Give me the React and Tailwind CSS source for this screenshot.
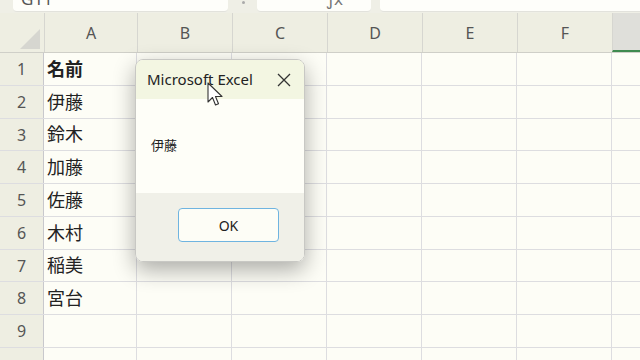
import React from "react";

const cols = [
  { l: "A", w: "w-[93px]" },
  { l: "B", w: "w-[95px]" },
  { l: "C", w: "w-[95px]" },
  { l: "D", w: "w-[95px]" },
  { l: "E", w: "w-[95px]" },
  { l: "F", w: "w-[95px]" },
  { l: "", w: "w-[40px]" },
];
const rowH = ["h-[33px]", "h-[33px]", "h-[32px]", "h-[33px]", "h-[33px]", "h-[33px]", "h-[32px]", "h-[33px]", "h-[33px]", "h-[33px]"];
const names = ["名前", "伊藤", "鈴木", "加藤", "佐藤", "木村", "稲美", "宮台", "", ""];

export default function App() {
  return (
    <div className="relative w-[640px] h-[360px] overflow-hidden bg-[#fdfdf6] text-[#333]" style={{ fontFamily: '"Noto Sans", "Noto Sans CJK JP", sans-serif' }}>
      {/* top strip */}
      <div className="flex h-[13px] bg-[#efefe6] items-start">
        <div className="ml-[13px] w-[215px] shrink-0 h-[12px] bg-[#fefefa] rounded-b-[4px] border-b border-[#e2e2dc] overflow-hidden">
          <div className="-mt-[12px] pl-[8px] text-[17px] leading-[22px] text-[#555]">G11</div>
        </div>
        <div className="ml-[14px] w-[3px] h-[3px] mt-[1px] shrink-0 rounded-full bg-[#aaa]"></div>
        <div className="ml-[12px] w-[114px] shrink-0 h-[12px] bg-[#fefefa] rounded-b-[4px] border-b border-[#e2e2dc] overflow-hidden">
          <div className="-mt-[12px] pl-[70px] text-[17px] leading-[22px] text-[#777]">ƒx</div>
        </div>
        <div className="ml-[9px] flex-1 h-[12px] bg-[#fefefa] rounded-bl-[4px] border-b border-[#e2e2dc]"></div>
      </div>
      {/* column header */}
      <div className="flex h-[40px] bg-[#eeeee2] border-b border-[#cfcfc8]">
        <div className="w-[44px] shrink-0 flex items-end justify-end pr-[4px] pb-[3px]">
          <svg width="20" height="20" viewBox="0 0 20 20"><polygon points="20,0 20,20 0,20" fill="#d6d6d0" /></svg>
        </div>
        {cols.map((c, i) => (
          <div key={i} className={`${c.w} shrink-0 flex items-center justify-center text-[16px] text-[#555] border-l border-[#d6d6d0] ${c.l === "" ? "bg-[#dfdfda] border-b-2 border-b-[#3f8a4f]" : ""}`}>
            {c.l}
          </div>
        ))}
      </div>
      {/* rows */}
      {rowH.map((h, r) => (
        <div key={r} className={`flex ${h} border-b border-[#dddde0]`}>
          <div className="w-[44px] shrink-0 bg-[#eeeee2] flex items-center justify-center text-[16px] text-[#555] border-r border-[#c8c8cc]">{r < 9 ? r + 1 : ""}</div>
          {cols.map((c, i) => (
            <div key={i} className={`${c.w} shrink-0 border-r border-[#dddde0] flex items-center pl-[3px] text-[18px] text-[#222] ${r === 0 ? "font-bold" : ""}`}>
              {i === 0 ? names[r] : ""}
            </div>
          ))}
        </div>
      ))}

      {/* dialog */}
      <div className="absolute left-[135px] top-[59px] w-[170px] h-[203px] rounded-[8px] overflow-hidden border border-[#c8c8c4] shadow-[0_8px_22px_rgba(0,0,0,0.32)] flex flex-col">
        <div className="h-[39px] bg-[#f3f6e2] flex items-center justify-between pl-[11px] pr-[13px]">
          <span className="text-[15px] text-[#222]">Microsoft Excel</span>
          <svg width="14" height="14" viewBox="0 0 14 14"><path d="M1 1 L13 13 M13 1 L1 13" stroke="#333" strokeWidth="1.3" fill="none" /></svg>
        </div>
        <div className="h-[94px] bg-[#fefef8] flex items-center pl-[15px] text-[13px] text-[#222]">伊藤</div>
        <div className="flex-1 bg-[#f0f0e8] flex justify-end pr-[25px] pt-[15px]">
          <div className="w-[101px] h-[34px] rounded-[4px] border border-[#6fb4e0] bg-[#fdfdf6] flex items-center justify-center text-[14px] text-[#222]">OK</div>
        </div>
      </div>

      {/* cursor */}
      <svg className="absolute left-[207px] top-[82px]" width="18" height="26" viewBox="0 0 18 26">
        <path d="M1 1 L1 20 L5.5 15.5 L8.5 23 L11.5 21.8 L8.5 14.5 L15 14.5 Z" fill="#fff" stroke="#333" strokeWidth="1.1" strokeLinejoin="round" />
      </svg>
    </div>
  );
}
